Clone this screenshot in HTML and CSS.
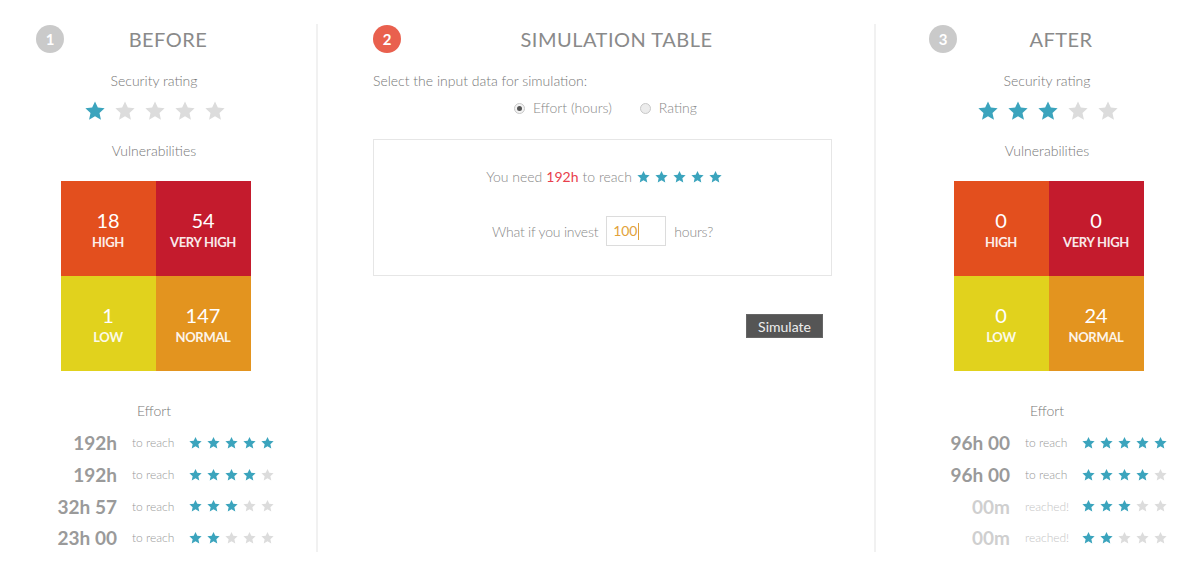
FILE: index.html
```html
<!DOCTYPE html>
<html>
<head>
<meta charset="utf-8">
<link rel="stylesheet" href="styles.css">
</head>
<body>
<svg width="0" height="0" class="defs">
  <defs>
    <symbol id="star" viewBox="0 0 24 24">
      <polygon points="12,1.5 15.1,8.3 22.5,9.1 16.9,14.1 18.5,21.5 12,17.7 5.5,21.5 7.1,14.1 1.5,9.1 8.9,8.3"/>
    </symbol>
  </defs>
</svg>
<div class="page">
  <section class="col col-before">
    <div class="head"><span class="badge">1</span><h2 class="title">BEFORE</h2></div>
    <div class="label">Security rating</div>
    <div class="stars big">
      <svg class="on"><use href="#star"/></svg><svg><use href="#star"/></svg><svg><use href="#star"/></svg><svg><use href="#star"/></svg><svg><use href="#star"/></svg>
    </div>
    <div class="label vul">Vulnerabilities</div>
    <div class="grid">
      <div class="cell high"><span class="num">18</span><span class="cap">HIGH</span></div>
      <div class="cell vhigh"><span class="num">54</span><span class="cap">VERY HIGH</span></div>
      <div class="cell low"><span class="num">1</span><span class="cap">LOW</span></div>
      <div class="cell normal"><span class="num">147</span><span class="cap">NORMAL</span></div>
    </div>
    <div class="label effort-title">Effort</div>
    <div class="effort">
      <div class="row"><span class="val">192h</span><span class="txt">to reach</span><span class="stars small"><svg class="on"><use href="#star"/></svg><svg class="on"><use href="#star"/></svg><svg class="on"><use href="#star"/></svg><svg class="on"><use href="#star"/></svg><svg class="on"><use href="#star"/></svg></span></div>
      <div class="row"><span class="val">192h</span><span class="txt">to reach</span><span class="stars small"><svg class="on"><use href="#star"/></svg><svg class="on"><use href="#star"/></svg><svg class="on"><use href="#star"/></svg><svg class="on"><use href="#star"/></svg><svg><use href="#star"/></svg></span></div>
      <div class="row"><span class="val">32h 57</span><span class="txt">to reach</span><span class="stars small"><svg class="on"><use href="#star"/></svg><svg class="on"><use href="#star"/></svg><svg class="on"><use href="#star"/></svg><svg><use href="#star"/></svg><svg><use href="#star"/></svg></span></div>
      <div class="row"><span class="val">23h 00</span><span class="txt">to reach</span><span class="stars small"><svg class="on"><use href="#star"/></svg><svg class="on"><use href="#star"/></svg><svg><use href="#star"/></svg><svg><use href="#star"/></svg><svg><use href="#star"/></svg></span></div>
    </div>
  </section>

  <section class="col col-sim">
    <div class="head"><span class="badge red">2</span><h2 class="title">SIMULATION TABLE</h2></div>
    <div class="intro">Select the input data for simulation:</div>
    <div class="radios">
      <label class="radio"><span class="dot checked"></span>Effort (hours)</label>
      <label class="radio"><span class="dot"></span>Rating</label>
    </div>
    <div class="box">
      <div class="need">You need <span class="hl">192h</span> to reach <span class="stars small inline"><svg class="on"><use href="#star"/></svg><svg class="on"><use href="#star"/></svg><svg class="on"><use href="#star"/></svg><svg class="on"><use href="#star"/></svg><svg class="on"><use href="#star"/></svg></span></div>
      <div class="invest">What if you invest <span class="input">100<span class="caret"></span></span> hours?</div>
    </div>
    <div class="actions"><button class="btn">Simulate</button></div>
  </section>

  <section class="col col-after">
    <div class="head"><span class="badge">3</span><h2 class="title">AFTER</h2></div>
    <div class="label">Security rating</div>
    <div class="stars big">
      <svg class="on"><use href="#star"/></svg><svg class="on"><use href="#star"/></svg><svg class="on"><use href="#star"/></svg><svg><use href="#star"/></svg><svg><use href="#star"/></svg>
    </div>
    <div class="label vul">Vulnerabilities</div>
    <div class="grid">
      <div class="cell high"><span class="num">0</span><span class="cap">HIGH</span></div>
      <div class="cell vhigh"><span class="num">0</span><span class="cap">VERY HIGH</span></div>
      <div class="cell low"><span class="num">0</span><span class="cap">LOW</span></div>
      <div class="cell normal"><span class="num">24</span><span class="cap">NORMAL</span></div>
    </div>
    <div class="label effort-title">Effort</div>
    <div class="effort">
      <div class="row"><span class="val">96h 00</span><span class="txt">to reach</span><span class="stars small"><svg class="on"><use href="#star"/></svg><svg class="on"><use href="#star"/></svg><svg class="on"><use href="#star"/></svg><svg class="on"><use href="#star"/></svg><svg class="on"><use href="#star"/></svg></span></div>
      <div class="row"><span class="val">96h 00</span><span class="txt">to reach</span><span class="stars small"><svg class="on"><use href="#star"/></svg><svg class="on"><use href="#star"/></svg><svg class="on"><use href="#star"/></svg><svg class="on"><use href="#star"/></svg><svg><use href="#star"/></svg></span></div>
      <div class="row done"><span class="val">00m</span><span class="txt">reached!</span><span class="stars small"><svg class="on"><use href="#star"/></svg><svg class="on"><use href="#star"/></svg><svg class="on"><use href="#star"/></svg><svg><use href="#star"/></svg><svg><use href="#star"/></svg></span></div>
      <div class="row done"><span class="val">00m</span><span class="txt">reached!</span><span class="stars small"><svg class="on"><use href="#star"/></svg><svg class="on"><use href="#star"/></svg><svg><use href="#star"/></svg><svg><use href="#star"/></svg><svg><use href="#star"/></svg></span></div>
    </div>
  </section>
</div>
</body>
</html>
```

FILE: styles.css
```css
* { box-sizing: border-box; }
html, body { margin: 0; padding: 0; background: #fff; }
body { font-family: Lato, "Open Sans", "Liberation Sans", sans-serif; color: #777; width: 1200px; height: 586px; overflow: hidden; }
.defs { position: absolute; width: 0; height: 0; }

.page { display: grid; grid-template-columns: 318px 558px 324px; padding-top: 24px; }
.col { height: 528px; display: flex; flex-direction: column; }
.col-before { padding-left: 36px; padding-right: 44px; border-right: 2px solid #f1f1f1; }
.col-sim { padding-left: 55px; padding-right: 42px; border-right: 2px solid #f1f1f1; }
.col-after { padding-left: 53px; padding-right: 35px; }

.head { display: flex; align-items: center; height: 28px; margin-top: 1px; }
.badge { width: 28px; height: 28px; border-radius: 50%; background: #cacaca; color: #fff; font-size: 15px; font-weight: 700; display: flex; align-items: center; justify-content: center; flex: none; }
.badge.red { background: #e9604e; }
.title { flex: 1; margin: 0; text-align: center; font-weight: 400; font-size: 20px; color: #8a8a8a; letter-spacing: 0.5px; }

.label { text-align: center; font-size: 14px; font-weight: 300; line-height: 20px; color: #777; margin-top: 18px; }
.label.vul { margin-top: 19px; }
.effort-title { margin-top: 30px; }

.stars { display: flex; }
.stars svg { fill: #dcdcdc; }
.stars svg.on { fill: #3ba4bd; }
.stars.big { justify-content: center; gap: 6px; margin-top: 9px; height: 22px; padding-left: 2px; }
.stars.big svg { width: 24px; height: 22px; }
.stars.small { gap: 3px; }
.stars.small svg { width: 15px; height: 14px; }

.grid { display: grid; grid-template-columns: 95px 95px; grid-template-rows: 95px 95px; margin: 20px auto 0; width: 190px; padding-left: 3px; box-sizing: content-box; }
.cell { display: flex; flex-direction: column; align-items: center; justify-content: center; color: #fff; padding-top: 1px; }
.cell .num { font-size: 20px; line-height: 24px; }
.cell .cap { font-size: 13px; line-height: 18px; margin-top: 1px; font-weight: 700; opacity: 0.9; letter-spacing: -0.3px; }
.high { background: #e34f1e; }
.vhigh { background: #c41b2d; }
.low { background: #e1d21d; }
.normal { background: #e3941f; }

.effort { margin-top: 6px; }
.row { display: grid; grid-template-columns: 81px 44px auto; column-gap: 0; align-items: center; height: 31.7px; }
.row .val { text-align: right; font-size: 19px; font-weight: 700; color: #9a9a9a; }
.row .txt { font-size: 12px; font-weight: 300; color: #999; white-space: nowrap; margin-left: 15px; }
.row .stars { margin-left: 27px; }
.row.done .val { color: #cfcfcf; }
.row.done .txt { color: #c4c4c4; }

.intro { font-size: 14px; font-weight: 300; line-height: 20px; color: #777; margin-top: 18px; }
.radios { display: flex; justify-content: center; gap: 28px; margin-top: 7px; line-height: 20px; padding-left: 6px; }
.radio { display: flex; align-items: center; font-size: 14px; font-weight: 300; color: #888; }
.dot { width: 11px; height: 11px; border-radius: 50%; border: 1px solid #c8c8c8; background: #ececec; margin-right: 8px; position: relative; }
.dot.checked { background: #f4f4f4; }
.dot.checked::after { content: ""; position: absolute; left: 2px; top: 2px; width: 5px; height: 5px; border-radius: 50%; background: #555; }

.box { margin-top: 21px; border: 1px solid #e6e6e6; height: 137px; padding-top: 27px; text-align: center; }
.need { font-size: 14px; font-weight: 300; line-height: 20px; color: #888; display: flex; justify-content: center; align-items: center; gap: 4px; padding-left: 4px; }
.need .hl { color: #e8404c; font-weight: 400; }
.stars.inline { display: inline-flex; gap: 3px; }
.stars.inline svg { width: 15px; }
.invest { margin-top: 29px; display: flex; justify-content: center; align-items: center; gap: 8px; font-size: 14px; font-weight: 300; color: #888; padding-left: 0; letter-spacing: -0.2px; }
.input { width: 60px; height: 30px; border: 1px solid #dcdcdc; text-align: left; padding-left: 6px; line-height: 28px; color: #e2a23a; font-weight: 400; display: inline-flex; align-items: center; }
.caret { width: 1px; height: 17px; background: #e2a23a; margin-left: 1px; }

.actions { display: flex; justify-content: flex-end; margin-top: 38px; padding-right: 9px; }
.btn { font-family: Lato, "Open Sans", sans-serif; font-size: 14px; background: #555; color: #eee; border: 1px solid #666; height: 24px; width: 77px; padding: 0; font-weight: 400; }
```
